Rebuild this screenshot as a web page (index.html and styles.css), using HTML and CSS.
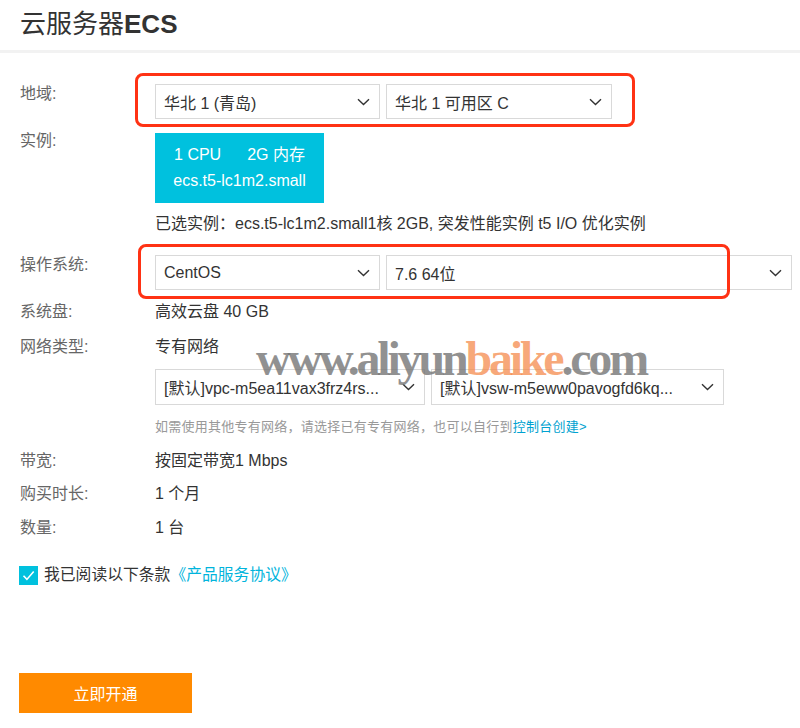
FILE: index.html
```html
<!DOCTYPE html>
<html lang="zh-CN">
<head>
<meta charset="utf-8">
<title>云服务器ECS</title>
<link rel="stylesheet" href="styles.css">
</head>
<body>
<header class="top">
  <h1 class="title">云服务器<b>ECS</b></h1>
</header>
<main class="form">
  <div class="row row-region">
    <div class="label">地域:</div>
    <div class="value">
      <div class="sel-group">
        <div class="select w-225"><span>华北 1 (青岛)</span><svg class="chev" width="13" height="8" viewBox="0 0 13 8"><path d="M1 1.2l5.5 5.3 5.5-5.3" fill="none" stroke="#333" stroke-width="1.4"/></svg></div>
        <div class="select w-226"><span>华北 1 可用区 C</span><svg class="chev" width="13" height="8" viewBox="0 0 13 8"><path d="M1 1.2l5.5 5.3 5.5-5.3" fill="none" stroke="#333" stroke-width="1.4"/></svg></div>
        <span class="mark mark-region"></span>
      </div>
    </div>
  </div>

  <div class="row row-instance">
    <div class="label">实例:</div>
    <div class="value">
      <div class="card">
        <div class="card-line"><span>1 CPU</span><span class="card-mem">2G 内存</span></div>
        <div class="card-line">ecs.t5-lc1m2.small</div>
      </div>
      <div class="chosen">已选实例：ecs.t5-lc1m2.small1核 2GB, 突发性能实例 t5 I/O 优化实例</div>
    </div>
  </div>

  <div class="row row-os">
    <div class="label">操作系统:</div>
    <div class="value">
      <div class="sel-group">
        <div class="select w-225"><span>CentOS</span><svg class="chev" width="13" height="8" viewBox="0 0 13 8"><path d="M1 1.2l5.5 5.3 5.5-5.3" fill="none" stroke="#333" stroke-width="1.4"/></svg></div>
        <div class="select w-406"><span>7.6 64位</span><svg class="chev" width="13" height="8" viewBox="0 0 13 8"><path d="M1 1.2l5.5 5.3 5.5-5.3" fill="none" stroke="#333" stroke-width="1.4"/></svg></div>
        <span class="mark mark-os"></span>
      </div>
    </div>
  </div>

  <div class="row row-disk">
    <div class="label">系统盘:</div>
    <div class="value text">高效云盘 40 GB</div>
  </div>

  <div class="row row-net">
    <div class="label">网络类型:</div>
    <div class="value">
      <div class="text">专有网络</div>
      <div class="sel-group net-sel">
        <div class="select tall w-270"><span>[默认]vpc-m5ea11vax3frz4rs...</span><svg class="chev" width="13" height="8" viewBox="0 0 13 8"><path d="M1 1.2l5.5 5.3 5.5-5.3" fill="none" stroke="#333" stroke-width="1.4"/></svg></div>
        <div class="select tall w-293"><span>[默认]vsw-m5eww0pavogfd6kq...</span><svg class="chev" width="13" height="8" viewBox="0 0 13 8"><path d="M1 1.2l5.5 5.3 5.5-5.3" fill="none" stroke="#333" stroke-width="1.4"/></svg></div>
      </div>
      <div class="hint">如需使用其他专有网络，请选择已有专有网络，也可以自行到<a class="link" href="#">控制台创建&gt;</a></div>
    </div>
  </div>

  <div class="row row-bw">
    <div class="label">带宽:</div>
    <div class="value text">按固定带宽1 Mbps</div>
  </div>

  <div class="row row-time">
    <div class="label">购买时长:</div>
    <div class="value text">1 个月</div>
  </div>

  <div class="row row-count">
    <div class="label">数量:</div>
    <div class="value text">1 台</div>
  </div>

  <label class="agree">
    <span class="check"><svg width="19" height="19" viewBox="0 0 19 19"><path d="M4.5 9.8l3.4 3.6 6.8-8" fill="none" stroke="#fff" stroke-width="1.6"/></svg></span>
    <span class="agree-text">我已阅读以下条款<a class="link" href="#">《产品服务协议》</a></span>
  </label>

  <button class="buy" type="button">立即开通</button>
</main>
<div class="watermark">www.aliyun<span class="wm-orange">baike</span>.com</div>
</body>
</html>
```
FILE: styles.css
```css
* { box-sizing: border-box; }
html, body { margin: 0; padding: 0; background: #fff; }
body {
  font-family: "Liberation Sans", "Noto Sans CJK SC", sans-serif;
  color: #333;
  position: relative;
  width: 800px;
  height: 728px;
  overflow: hidden;
}
.top {
  height: 53px;
  border-bottom: 3px solid #f2f2f2;
  padding-left: 20px;
}
.title {
  margin: 0;
  font-size: 26px;
  font-weight: normal;
  line-height: 48px;
  color: #333;
}
.title b { font-weight: bold; }

.form { padding-left: 20px; }
.row {
  display: grid;
  grid-template-columns: 135px 1fr;
}
.label {
  font-size: 16px;
  line-height: 20px;
  color: #666;
}
.value { font-size: 16px; }
.text { line-height: 20px; color: #333; }

.row-region { margin-top: 31px; }
.row-instance { margin-top: 14px; }
.row-instance .label { margin-top: -2px; }
.row-os { margin-top: 21px; }
.row-disk { margin-top: 12px; }
.row-net { margin-top: 15px; }
.row-bw { margin-top: 15px; }
.row-time { margin-top: 13px; }
.row-count { margin-top: 14px; }

.sel-group {
  position: relative;
  display: flex;
  width: fit-content;
  gap: 6px;
}
.select {
  height: 35px;
  border: 1px solid #d9d9d9;
  display: flex;
  align-items: center;
  justify-content: space-between;
  padding: 0 9px 0 8px;
  font-size: 16px;
  color: #333;
  background: #fff;
  white-space: nowrap;
}
.select.tall { height: 36px; }
.chev { flex: none; }
.w-225 { width: 225px; }
.w-226 { width: 226px; }
.w-406 { width: 406px; }
.w-270 { width: 270px; }
.w-293 { width: 293px; }

.mark {
  position: absolute;
  border: 3px solid #ff3214;
  border-radius: 8px;
  pointer-events: none;
}
.mark-region { top: -11px; left: -20px; right: -23px; bottom: -8px; }
.mark-os { top: -11px; left: -17px; right: 62px; bottom: -9px; }

.card {
  width: 169px;
  height: 70px;
  background: #00c1de;
  color: #fff;
  display: flex;
  flex-direction: column;
  align-items: center;
  justify-content: center;
  font-size: 16px;
}
.card-line { line-height: 26px; white-space: nowrap; }
.card-mem { margin-left: 26px; }
.chosen {
  margin-top: 11px;
  line-height: 20px;
  color: #333;
  white-space: nowrap;
}

.net-sel { margin-top: 12px; }
.hint {
  margin-top: 13px;
  font-size: 13px;
  line-height: 18px;
  letter-spacing: 0.25px;
  color: #999;
  white-space: nowrap;
}
.link { color: #00a2d0; text-decoration: none; }

.agree {
  margin-top: 27px;
  margin-left: -1px;
  display: flex;
  align-items: center;
  gap: 6px;
  height: 20px;
}
.check {
  width: 19px;
  height: 19px;
  background: #00c1de;
  display: block;
}
.check svg { display: block; }
.agree-text { font-size: 15.8px; color: #333; line-height: 20px; }
.agree-text .link { color: #00b4dc; }

.buy {
  display: block;
  margin-top: 88px;
  margin-left: -1px;
  width: 173px;
  height: 40px;
  border: 0;
  background: #ff8a00;
  color: #fff;
  font-family: "Noto Sans CJK SC", sans-serif;
  font-size: 16px;
  padding: 0;
}

.watermark {
  position: absolute;
  left: 256px;
  top: 331px;
  font-family: "Liberation Serif", serif;
  font-weight: bold;
  font-size: 48px;
  letter-spacing: -3.2px;
  line-height: 56px;
  color: rgba(115, 115, 115, 0.78);
  white-space: nowrap;
  pointer-events: none;
}
.wm-orange { color: rgba(245, 135, 70, 0.72); }
```
